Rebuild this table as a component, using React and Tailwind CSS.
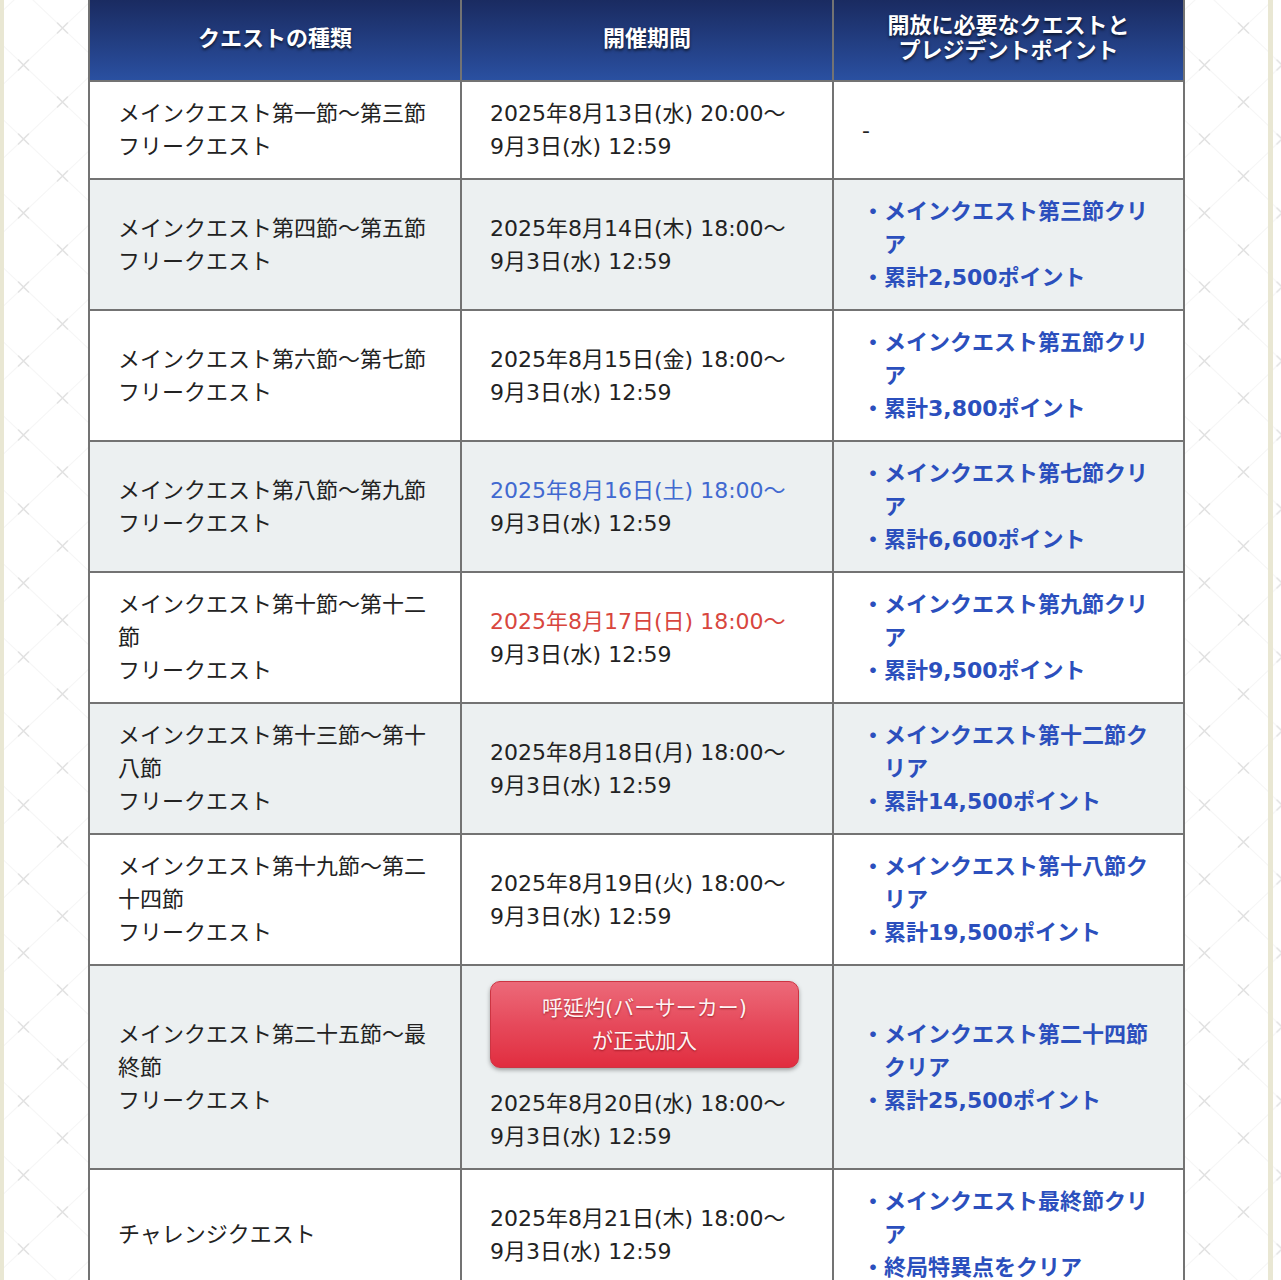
import React from 'react';

const rows = [
  { quest: ['メインクエスト第一節～第三節', 'フリークエスト'], start: '2025年8月13日(水) 20:00～', tone: 'normal', req: null },
  { quest: ['メインクエスト第四節～第五節', 'フリークエスト'], start: '2025年8月14日(木) 18:00～', tone: 'normal', req: ['メインクエスト第三節クリア', '累計2,500ポイント'] },
  { quest: ['メインクエスト第六節～第七節', 'フリークエスト'], start: '2025年8月15日(金) 18:00～', tone: 'normal', req: ['メインクエスト第五節クリア', '累計3,800ポイント'] },
  { quest: ['メインクエスト第八節～第九節', 'フリークエスト'], start: '2025年8月16日(土) 18:00～', tone: 'sat', req: ['メインクエスト第七節クリア', '累計6,600ポイント'] },
  { quest: ['メインクエスト第十節～第十二節', 'フリークエスト'], start: '2025年8月17日(日) 18:00～', tone: 'sun', req: ['メインクエスト第九節クリア', '累計9,500ポイント'] },
  { quest: ['メインクエスト第十三節～第十八節', 'フリークエスト'], start: '2025年8月18日(月) 18:00～', tone: 'normal', req: ['メインクエスト第十二節クリア', '累計14,500ポイント'] },
  { quest: ['メインクエスト第十九節～第二十四節', 'フリークエスト'], start: '2025年8月19日(火) 18:00～', tone: 'normal', req: ['メインクエスト第十八節クリア', '累計19,500ポイント'] },
  { quest: ['メインクエスト第二十五節～最終節', 'フリークエスト'], start: '2025年8月20日(水) 18:00～', tone: 'normal', req: ['メインクエスト第二十四節クリア', '累計25,500ポイント'], badge: true },
  { quest: ['チャレンジクエスト'], start: '2025年8月21日(木) 18:00～', tone: 'normal', req: ['メインクエスト最終節クリア', '終局特異点をクリア'] },
];

const toneClass = {
  normal: 'text-[#222]',
  sat: 'text-[#4169d0]',
  sun: 'text-[#d8463e]',
};

function Lattice({ id, ox = 0 }) {
  const shifts = [-78, 0, 78];
  return (
    <svg className="block h-full w-full" aria-hidden="true">
      <defs>
        <pattern id={id} width="78" height="74" patternUnits="userSpaceOnUse" patternTransform={`translate(${ox} 0)`}>
          {shifts.map((s) => (
            <line key={'d' + s} x1={-58.5 + s} y1={-9} x2={97.5 + s} y2={139} stroke="#f6f6f6" strokeWidth="1.2" />
          ))}
          {shifts.map((s) => (
            <line key={'u' + s} x1={-58.5 + s} y1={139} x2={97.5 + s} y2={-9} stroke="#f6f6f6" strokeWidth="1.2" />
          ))}
          <g stroke="#e2e2e2" strokeWidth="1.6" strokeLinecap="round">
            <path d="M14.5 60 L24.5 70 M24.5 60 L14.5 70" />
            <path d="M53.5 23 L63.5 33 M63.5 23 L53.5 33" />
          </g>
        </pattern>
      </defs>
      <rect width="100%" height="100%" fill={`url(#${id})`} />
    </svg>
  );
}

const cell = 'border-2 border-[#737373] px-[28px] py-[15px] align-middle text-[22px] leading-[33px]';
const head = 'h-[81px] border-x-2 border-b-2 border-[#737373] bg-linear-to-b from-[#1a2b61] to-[#2a50a1] px-2 pb-1 text-center align-middle text-[22px] font-bold leading-[25px] text-white [text-shadow:0_2px_3px_rgba(0,0,0,0.65)]';

export default function App() {
  return (
    <div className="flex min-h-[1280px] w-[1281px] bg-white font-['DejaVu_Sans','Noto_Sans_CJK_JP',sans-serif]">
      <div className="w-[4px] shrink-0 bg-[#e9e7d3]" />
      <div className="w-[84px] shrink-0">
        <Lattice id="lat-left" />
      </div>

      <table className="w-[1095px] shrink-0 table-fixed border-collapse self-start">
        <colgroup>
          <col className="w-[372px]" />
          <col className="w-[372px]" />
          <col className="w-[351px]" />
        </colgroup>
        <thead>
          <tr>
            <th className={head}>クエストの種類</th>
            <th className={head}>開催期間</th>
            <th className={head}>
              開放に必要なクエストと
              <br />
              プレジデントポイント
            </th>
          </tr>
        </thead>
        <tbody>
          {rows.map((row, i) => (
            <tr key={i} className={i % 2 === 1 ? 'bg-[#ecf0f1]' : 'bg-white'}>
              <td className={`${cell} text-[#222]`}>
                {row.quest.map((q, j) => (
                  <div key={j}>{q}</div>
                ))}
              </td>
              <td className={`${cell} text-[#222]`}>
                {row.badge && (
                  <div className="mb-[19px] w-[309px] rounded-[10px] border border-[#cc3442] bg-linear-to-b from-[#ec6979] via-[#e6495b] to-[#e12c3f] pt-[10px] pb-[9px] text-center text-[21px] leading-[33px] text-[#fff3f3] shadow-[0_2px_4px_rgba(0,0,0,0.35)] [text-shadow:0_1px_2px_rgba(110,0,10,0.6)]">
                    呼延灼(バーサーカー)
                    <br />
                    が正式加入
                  </div>
                )}
                <div className={toneClass[row.tone]}>{row.start}</div>
                <div>9月3日(水) 12:59</div>
              </td>
              <td className={cell}>
                {row.req ? (
                  <ul className="font-bold text-[#2b4fbd]">
                    {row.req.map((r, j) => (
                      <li key={j} className="flex">
                        <span className="w-[22px] shrink-0">・</span>
                        <span>{r}</span>
                      </li>
                    ))}
                  </ul>
                ) : (
                  <span className="text-[#222]">-</span>
                )}
              </td>
            </tr>
          ))}
        </tbody>
      </table>

      <div className="w-[83px] shrink-0">
        <Lattice id="lat-right" />
      </div>
      <div className="w-[5px] shrink-0 bg-[#e9e7d3]" />
      <div className="flex-1">
        <Lattice id="lat-edge" ox={-10.5} />
      </div>
    </div>
  );
}
